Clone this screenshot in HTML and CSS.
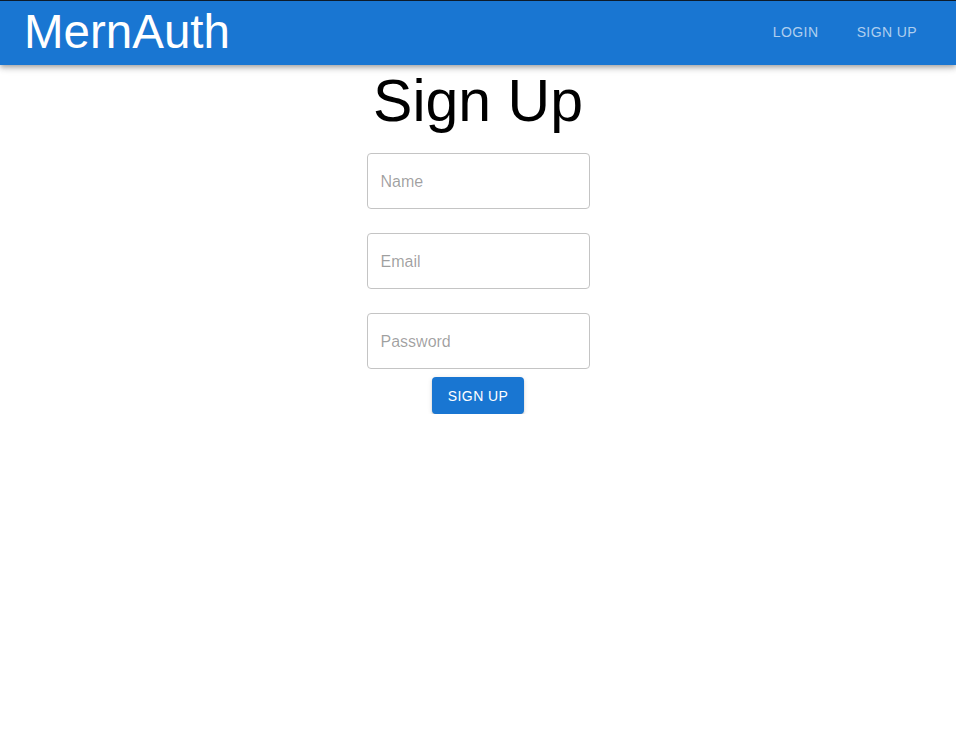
FILE: index.html
```html
<!DOCTYPE html>
<html lang="en">
<head>
<meta charset="utf-8">
<title>MernAuth</title>
<link rel="stylesheet" href="styles.css">
</head>
<body>
<header class="appbar">
  <div class="brand">MernAuth</div>
  <nav class="nav">
    <a class="nav-btn" href="#">Login</a>
    <a class="nav-btn" href="#">Sign Up</a>
  </nav>
</header>
<main class="page">
  <h2 class="heading">Sign Up</h2>
  <form class="form">
    <div class="field"><input class="input" type="text" placeholder="Name"></div>
    <div class="field"><input class="input" type="email" placeholder="Email"></div>
    <div class="field"><input class="input" type="password" placeholder="Password"></div>
    <button class="submit" type="button">Sign Up</button>
  </form>
</main>
</body>
</html>
```

FILE: styles.css
```css
* { box-sizing: border-box; }
html, body {
  margin: 0;
  padding: 0;
  background: #fff;
  font-family: "Liberation Sans", Arial, sans-serif;
}
body { border-top: 1px solid #0d1b2a; }
.appbar {
  position: relative;
  z-index: 2;
  height: 64px;
  background: #1976d2;
  color: #fff;
  display: flex;
  align-items: center;
  justify-content: space-between;
  padding: 0 31px 0 24px;
  box-shadow: 0 2px 4px -1px rgba(0,0,0,0.2), 0 4px 5px 0 rgba(0,0,0,0.14), 0 1px 10px 0 rgba(0,0,0,0.12);
}
.brand {
  font-size: 47.5px;
  line-height: 1;
  margin-top: -2px;
}
.nav {
  display: flex;
  gap: 21px;
  align-items: center;
  margin-top: -2px;
}
.nav-btn {
  min-width: 64px;
  padding: 6px 8px;
  font-size: 14px;
  line-height: 24.5px;
  letter-spacing: 0.4px;
  text-transform: uppercase;
  text-align: center;
  text-decoration: none;
  color: rgba(255,255,255,0.66);
}
.page {
  display: flex;
  flex-direction: column;
  align-items: center;
}
.heading {
  margin: 0;
  font-size: 59px;
  font-weight: 400;
  line-height: 72px;
  color: #000;
}
.form {
  display: flex;
  flex-direction: column;
  align-items: center;
}
.field {
  margin: 16px 0 8px;
}
.input {
  display: block;
  width: 223px;
  height: 56px;
  padding: 2px 13px 0;
  border: 1px solid #c4c4c4;
  border-radius: 4px;
  font-family: "Liberation Sans", Arial, sans-serif;
  font-size: 16px;
  color: rgba(0,0,0,0.87);
  outline: none;
  background: #fff;
}
.input::placeholder {
  color: rgba(0,0,0,0.38);
  opacity: 1;
}
.submit {
  margin-top: 0;
  height: 37px;
  padding: 6px 16px;
  border: 0;
  border-radius: 4px;
  background: #1976d2;
  color: #fff;
  font-family: "Liberation Sans", Arial, sans-serif;
  font-size: 14px;
  letter-spacing: 0.4px;
  text-transform: uppercase;
  box-shadow: 0 3px 1px -2px rgba(0,0,0,0.2), 0 2px 2px 0 rgba(0,0,0,0.14), 0 1px 5px 0 rgba(0,0,0,0.12);
  cursor: pointer;
}
```
